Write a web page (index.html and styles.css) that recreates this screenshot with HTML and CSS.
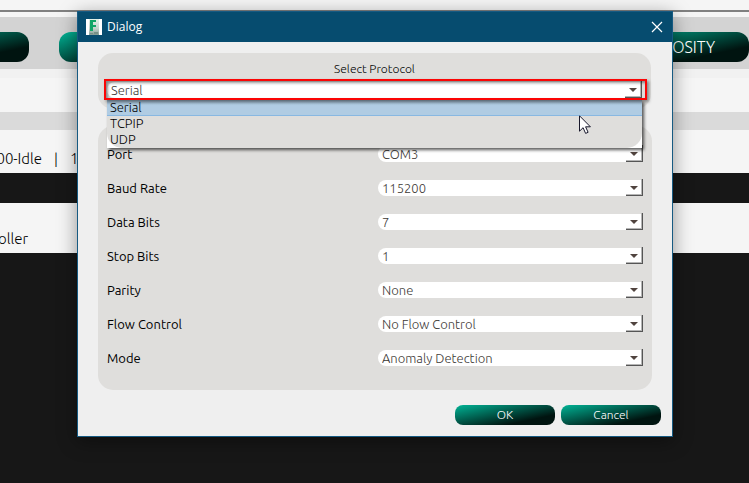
FILE: index.html
```html
<!DOCTYPE html>
<html lang="en">
<head>
<meta charset="utf-8">
<title>Dialog</title>
<link rel="stylesheet" href="styles.css">
</head>
<body>
<main class="app">
  <div class="app-top"></div>
  <div class="toolbar">
    <button class="pill" type="button" aria-label="Command 1"></button>
    <button class="pill" type="button" aria-label="Command 2"></button>
    <button class="pill" type="button" aria-label="Command 3"></button>
    <button class="pill" type="button" aria-label="Command 4"></button>
    <button class="pill" type="button">OSITY</button>
  </div>
  <div class="band"></div>
  <div class="divider"></div>
  <div class="status"><span class="tail">00-Idle</span><span>|</span><span>10</span></div>
  <div class="dark-strip"></div>
  <div class="caption"><span class="tail">oller</span></div>
</main>

<section class="dialog" role="dialog" aria-labelledby="dialog-title">
  <header class="titlebar">
    <svg class="logo" viewBox="0 0 16 16" aria-hidden="true">
      <defs><linearGradient id="fade" x1="0" y1="0" x2="0" y2="1"><stop offset="0" stop-color="#e4f3e9"/><stop offset=".6" stop-color="#c3d3cb"/><stop offset="1" stop-color="#829b93"/></linearGradient></defs>
      <path fill="#fff" d="M0 0h16v16H0z"/>
      <path fill="url(#fade)" d="M3 0h10v16H3z"/>
      <path fill="#12a668" d="M4 1h6v2H7v3h3v2H7v4H4z"/>
      <path fill="#779087" d="M4 14h3v1H4zM8 13h4v2H8z"/>
    </svg>
    <h1 id="dialog-title">Dialog</h1>
    <button class="close" type="button" aria-label="Close">
      <svg viewBox="0 0 10 10"><path d="M0 0l10 10M10 0L0 10"/></svg>
    </button>
  </header>

  <form class="content">
    <div class="panel protocol">
      <label for="protocol">Select Protocol</label>
      <div class="picker">
        <span class="combo"><select id="protocol"><option>Serial</option><option>TCPIP</option><option>UDP</option></select></span>
        <div class="popup">
          <ul role="listbox" aria-label="Protocols">
            <li role="option" aria-selected="true">Serial</li>
            <li role="option" aria-selected="false">TCPIP</li>
            <li role="option" aria-selected="false">UDP</li>
          </ul>
        </div>
        <div class="highlight"></div>
        <svg class="cursor" viewBox="0 0 12 19" aria-hidden="true"><path d="M.5.8v15.4l3.6-3.5 2.5 5.7 2.5-1.1-2.5-5.5h4.8z"/></svg>
      </div>
    </div>

    <div class="panel settings">
      <label for="port">Port</label>
      <span class="combo"><select id="port"><option>COM3</option></select></span>
      <label for="baud">Baud Rate</label>
      <span class="combo"><select id="baud"><option>115200</option></select></span>
      <label for="data">Data Bits</label>
      <span class="combo"><select id="data"><option>7</option></select></span>
      <label for="stop">Stop Bits</label>
      <span class="combo"><select id="stop"><option>1</option></select></span>
      <label for="parity">Parity</label>
      <span class="combo"><select id="parity"><option>None</option></select></span>
      <label for="flow">Flow Control</label>
      <span class="combo"><select id="flow"><option>No Flow Control</option></select></span>
      <label for="mode">Mode</label>
      <span class="combo"><select id="mode"><option>Anomaly Detection</option></select></span>
    </div>

    <div class="actions">
      <button class="action" type="button">OK</button>
      <button class="action" type="button">Cancel</button>
    </div>
  </form>
</section>
</body>
</html>
```

FILE: styles.css
```css
* { box-sizing: border-box; }

body {
  margin: 0;
  min-height: 100vh;
  background: #171717;
  color: #000;
  font-family: "Ubuntu", "Noto Sans", sans-serif;
  font-size: 12px;
  font-weight: 300;
  line-height: 16px;
  overflow: hidden;
}

button, select { font: inherit; }

/* Application window behind the dialog */
.app { background: #f5f5f5; }

.app-top {
  height: 12px;
  border-bottom: 2px solid #808080;
}

.toolbar {
  display: flex;
  justify-content: flex-end;
  gap: 30px;
  margin-top: 5px;
  padding: 15px 0 7px;
  background: #d3d3d3;
  overflow: hidden;
}

.pill {
  flex: none;
  width: 150px;
  height: 30px;
  padding: 0 34px;
  border: 0;
  border-radius: 12px;
  background: linear-gradient(168deg, #00b496 0%, #001410 75%);
  color: #fff;
  font-size: 16px;
  text-align: right;
}

.band {
  height: 43px;
  border-top: 9px solid #f1f1f1;
}

.divider {
  height: 18px;
  background: #dadada;
}

.status, .caption {
  display: flex;
  gap: 12px;
  font-size: 15px;
  line-height: 20px;
}

.status { height: 43px; padding-top: 19px; }

.tail {
  display: flex;
  justify-content: flex-end;
  width: 42px;
  white-space: nowrap;
}

.dark-strip {
  height: 30px;
  background: #171717;
}

.caption { height: 50px; padding-top: 26px; }
.caption .tail { width: 28px; }

/* Dialog window */
.dialog {
  position: absolute;
  top: 11px;
  left: 77px;
  right: 76px;
  border: 1px solid #165a82;
  background: #efefef;
  box-shadow: 0 4px 18px rgba(0, 0, 0, .4);
}

.titlebar {
  display: flex;
  align-items: center;
  gap: 5px;
  height: 30px;
  padding: 0 10px 0 8px;
  background: #064c6f;
  color: #fff;
  font-family: "Open Sans", sans-serif;
}

.logo { width: 16px; height: 16px; }

h1 {
  flex: 1;
  margin: 0;
  font-size: 12px;
  font-weight: 400;
}

.close {
  display: flex;
  padding: 0;
  border: 0;
  background: none;
}

.close svg {
  width: 10px;
  height: 10px;
  overflow: visible;
  fill: none;
  stroke: #fff;
  stroke-width: 1.2;
}

.content { padding: 11px 20px; }

.panel {
  padding: 8px 9px;
  border-radius: 15px;
  background: #dfdedc;
}

.protocol {
  height: 56px;
  margin: 0 1px 17px 0;
}

.protocol label {
  display: block;
  margin-bottom: 5px;
  text-align: center;
}

.picker { position: relative; }

.settings {
  display: grid;
  grid-template-columns: 1fr 1fr;
  gap: 18px 6px;
  padding: 20px 9px 24px;
}

.settings label {
  font-size: 13px;
  font-weight: 400;
}

.combo {
  position: relative;
  display: block;
  height: 16px;
}

.combo select {
  display: block;
  width: 100%;
  height: 16px;
  padding: 0 20px 0 4px;
  border: 0;
  border-radius: 8px 0 0 8px;
  outline: 0;
  appearance: none;
  background: #fff;
  color: #3c3835;
  font-size: 13px;
  line-height: 16px;
}

.combo::before {
  content: "";
  position: absolute;
  right: 0;
  bottom: 0;
  width: 16px;
  height: 16px;
  border: solid #555;
  border-width: 0 1px 1px 0;
  box-shadow: inset -1px -1px #b5b5b5;
  pointer-events: none;
}

.combo::after {
  content: "";
  position: absolute;
  top: 6px;
  right: 5px;
  width: 8px;
  height: 4px;
  background: #51443f;
  clip-path: polygon(0 0, 100% 0, 50% 100%);
  pointer-events: none;
}

.popup {
  position: absolute;
  z-index: 1;
  top: 18px;
  left: 0;
  right: 0;
  background: #fff;
  box-shadow: 2px 2px 3px rgba(0, 0, 0, .65);
  font-size: 13px;
}

.popup ul {
  margin: 0;
  padding: 0;
  border-radius: 15px;
  background: #dfdedc;
  list-style: none;
}

.popup li {
  height: 16px;
  padding-left: 3px;
  line-height: 15px;
}

.popup li[aria-selected="true"] {
  border-bottom: 1px solid #88b8e2;
  background: linear-gradient(#8fa8ba, #b0cce3 5px);
}

.highlight {
  position: absolute;
  z-index: 2;
  top: -3px;
  left: -3px;
  right: -5px;
  height: 21px;
  border: 2px solid #fb0505;
  box-shadow: 2px 2px 3px rgba(0, 0, 0, .4), inset 2px 2px 3px rgba(0, 0, 0, .4);
  pointer-events: none;
}

.cursor {
  position: absolute;
  z-index: 3;
  top: 33px;
  right: 51px;
  width: 12px;
  height: 19px;
  fill: #fff;
  stroke: #17172b;
}

.actions {
  display: flex;
  justify-content: flex-end;
  gap: 6px;
  margin: 15px -9px 0 0;
}

.action {
  width: 100px;
  height: 20px;
  padding: 0;
  border: 0;
  border-radius: 8px;
  background: linear-gradient(168deg, #00b496 0%, #001410 75%);
  color: #fff;
  font-size: 12px;
}
```
